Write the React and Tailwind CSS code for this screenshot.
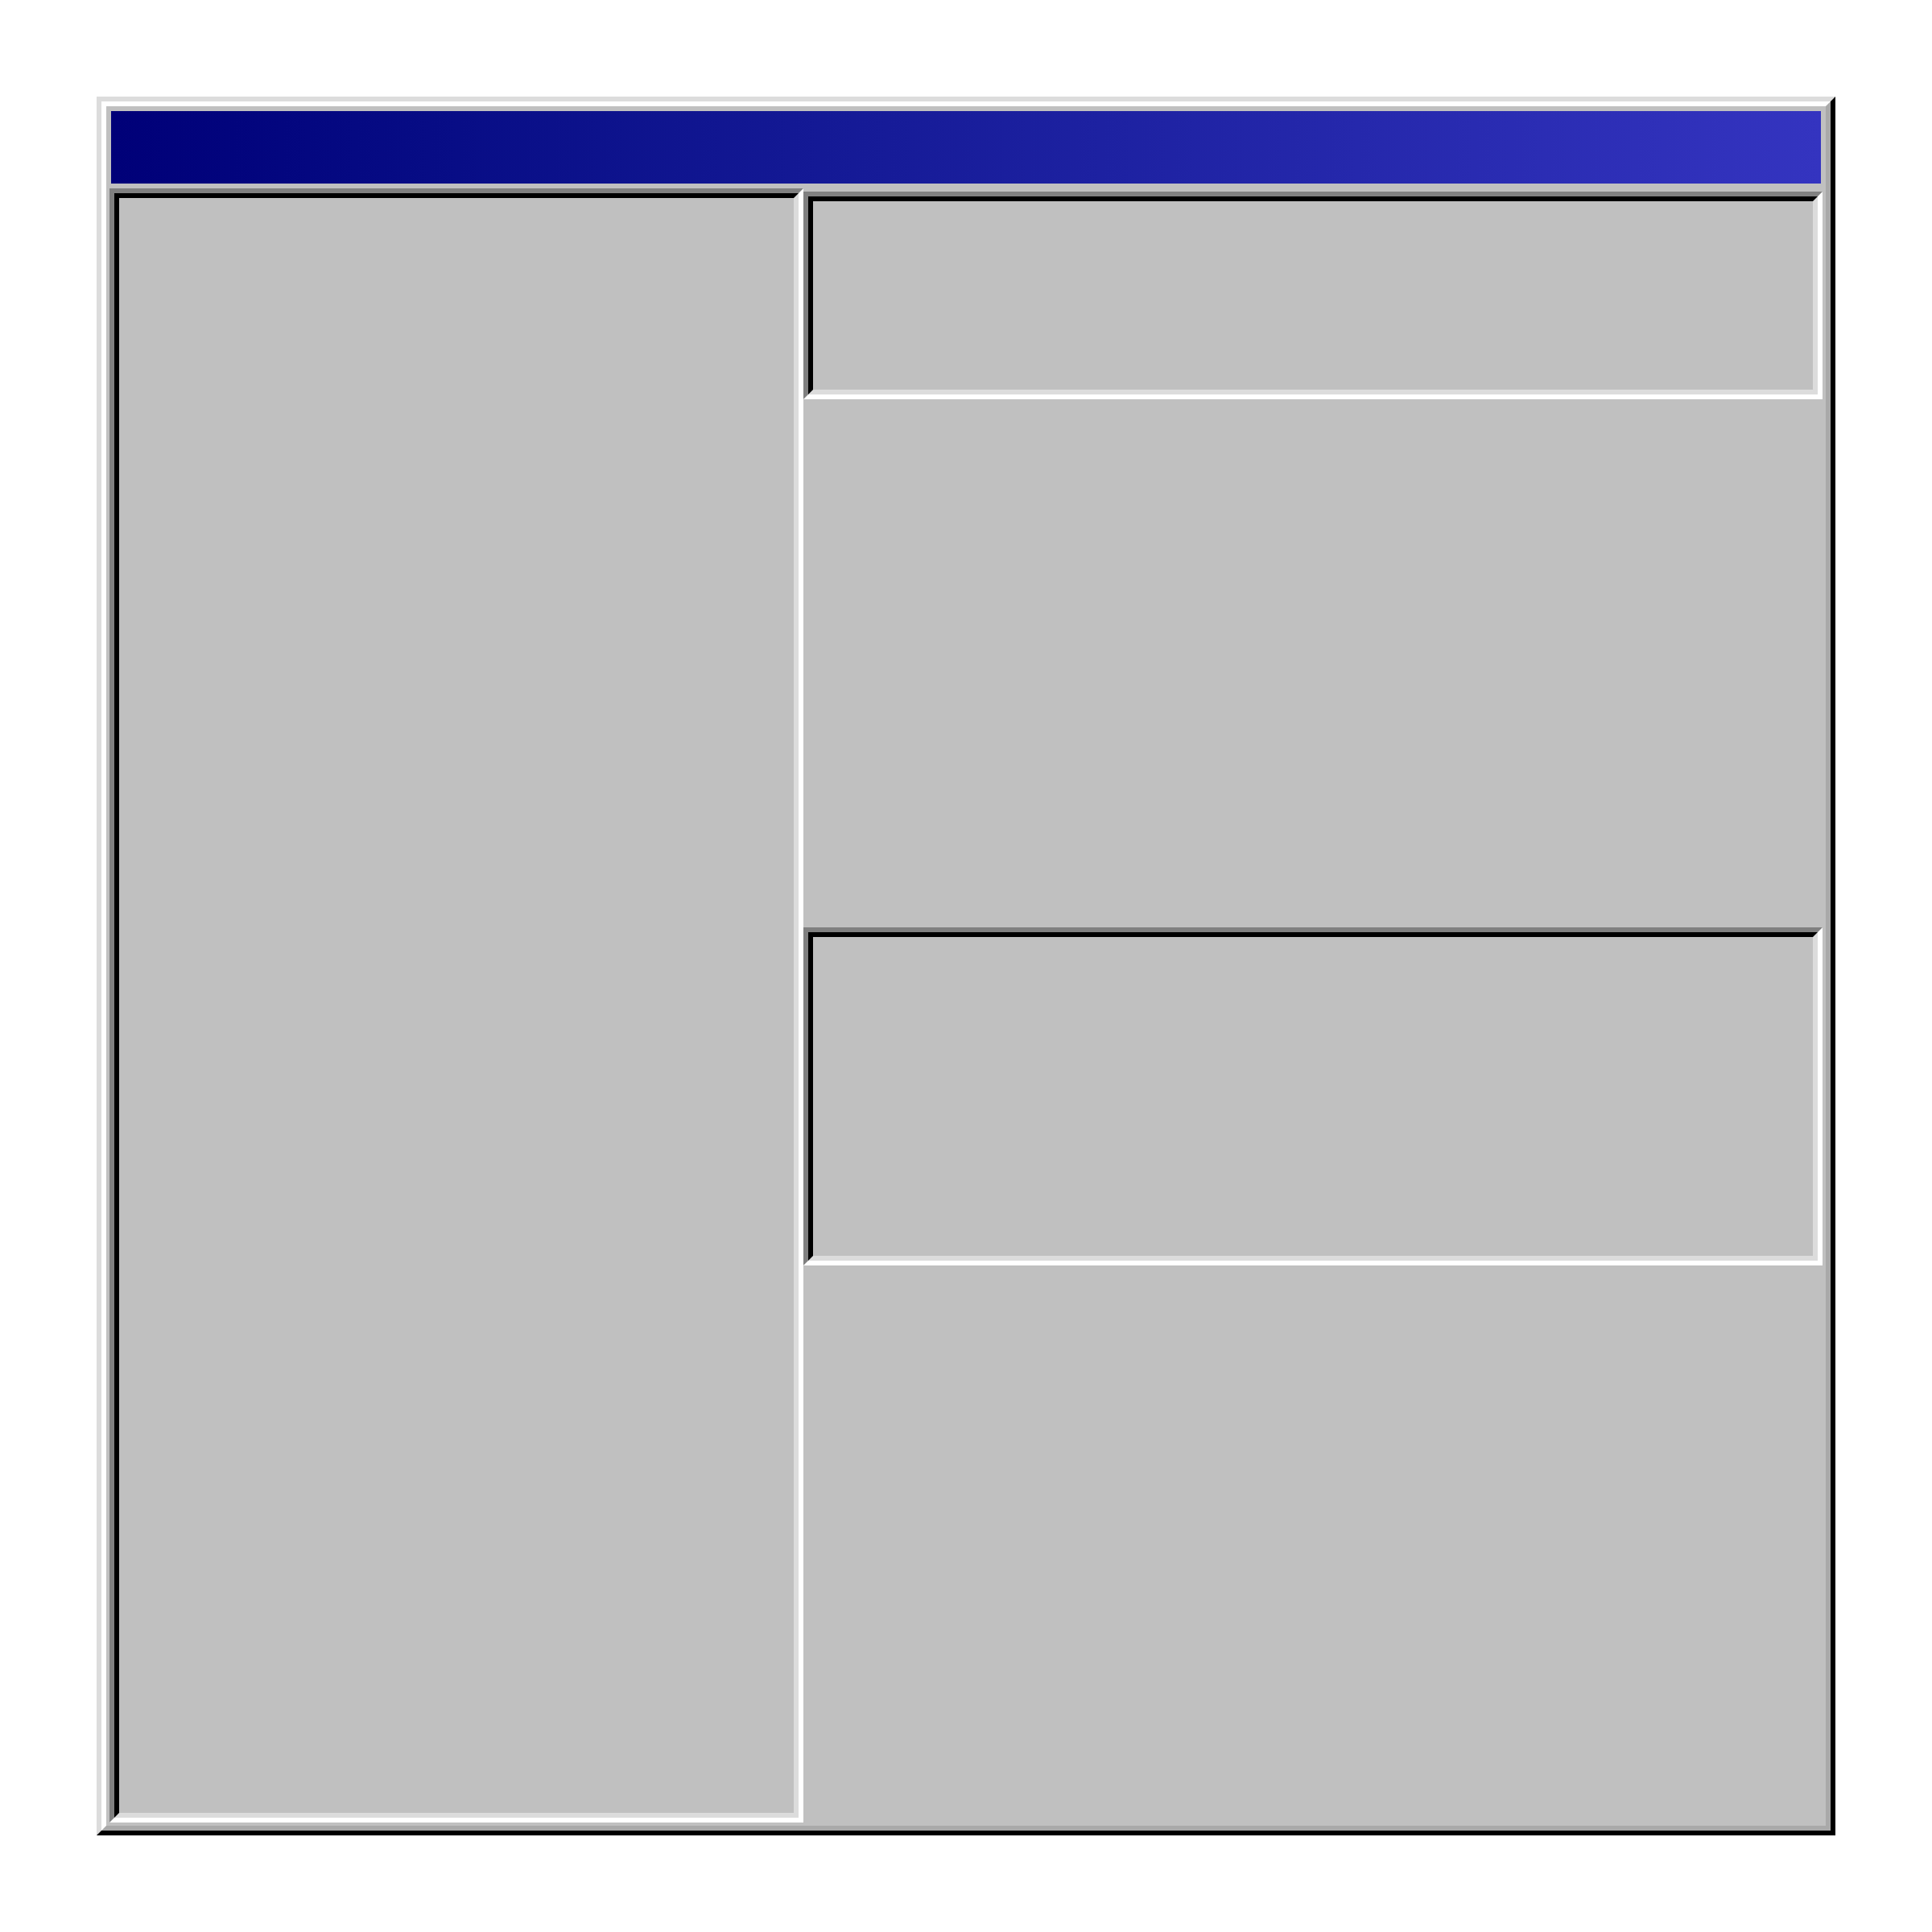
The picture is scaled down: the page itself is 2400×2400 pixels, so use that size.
export default function App() {
  return (
    <div className="w-[2400px] h-[2400px] bg-white pt-[120px] pl-[120px]">
      {/* window frame: two-level raised border */}
      <div className="w-[2160px] h-[2160px] border-[6px] border-t-[#dcdcdc] border-l-[#dcdcdc] border-r-black border-b-black">
        <div className="w-full h-full flex flex-col bg-[#c0c0c0] border-[6px] border-t-white border-l-white border-r-[#a9a9a9] border-b-[#a9a9a9]">
          {/* title bar */}
          <div className="mx-[6px] mt-[6px] h-[90px] shrink-0 bg-gradient-to-r from-[#000078] to-[#3434c0]"></div>

          <div className="flex flex-1 mt-[6px] mx-[4px] mb-[4px]">
            {/* left pane */}
            <div className="w-[862px] h-full border-[6px] border-t-[#808080] border-l-[#808080] border-r-white border-b-white">
              <div className="w-full h-full border-[6px] border-t-black border-l-black border-r-[#dcdcdc] border-b-[#dcdcdc]"></div>
            </div>

            {/* right column */}
            <div className="flex-1 flex flex-col pt-[4px]">
              <div className="h-[258px] border-[6px] border-t-[#808080] border-l-[#808080] border-r-white border-b-white">
                <div className="w-full h-full border-[6px] border-t-black border-l-black border-r-[#dcdcdc] border-b-[#dcdcdc]"></div>
              </div>
              <div className="h-[420px] mt-[656px] border-[6px] border-t-[#808080] border-l-[#808080] border-r-white border-b-white">
                <div className="w-full h-full border-[6px] border-t-black border-l-black border-r-[#dcdcdc] border-b-[#dcdcdc]"></div>
              </div>
            </div>
          </div>
        </div>
      </div>
    </div>
  );
}
